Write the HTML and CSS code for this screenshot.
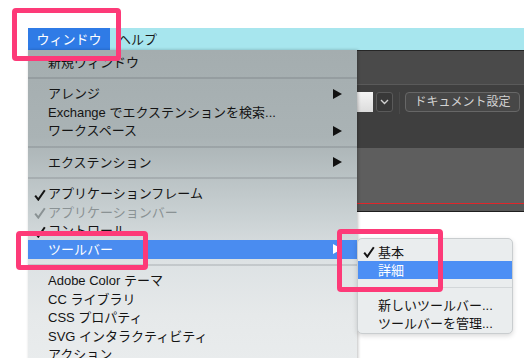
FILE: index.html
```html
<!DOCTYPE html>
<html lang="ja">
<head>
<meta charset="utf-8">
<title>ウィンドウ メニュー</title>
<link rel="stylesheet" href="styles.css">
</head>
<body>
<div class="screen">
	<div class="app">
		<div class="menubar">
			<span class="mb-item active">ウィンドウ</span>
			<span class="mb-item">ヘルプ</span>
		</div>
		<div class="app-head"></div>
		<div class="toolbar">
			<div class="field"></div>
			<div class="chev"><svg width="9" height="6" viewBox="0 0 9 6"><path d="M1 1 L4.5 4.5 L8 1" fill="none" stroke="#cfcfcf" stroke-width="1.4"/></svg></div>
			<div class="divider"></div>
			<div class="btn">ドキュメント設定</div>
		</div>
		<div class="panel"></div>
		<div class="panel-foot"></div>
	</div>

	<div class="menu">
		<div class="item">新規ウィンドウ</div>
		<div class="sep"></div>
		<div class="item">アレンジ<span class="arrow"></span></div>
		<div class="item">Exchange でエクステンションを検索...</div>
		<div class="item">ワークスペース<span class="arrow"></span></div>
		<div class="sep"></div>
		<div class="item">エクステンション<span class="arrow"></span></div>
		<div class="sep"></div>
		<div class="item"><svg class="check" width="12" height="12" viewBox="0 0 12 12"><path d="M1.2 6.6 L4.3 10.6 L10.8 1.2" fill="none" stroke="#141414" stroke-width="2"/></svg>アプリケーションフレーム</div>
		<div class="item disabled"><svg class="check" width="12" height="12" viewBox="0 0 12 12"><path d="M1.2 6.6 L4.3 10.6 L10.8 1.2" fill="none" stroke="#8a9294" stroke-width="2"/></svg>アプリケーションバー</div>
		<div class="item"><svg class="check" width="12" height="12" viewBox="0 0 12 12"><path d="M1.2 6.6 L4.3 10.6 L10.8 1.2" fill="none" stroke="#141414" stroke-width="2"/></svg>コントロール</div>
		<div class="item active">ツールバー<span class="arrow"></span></div>
		<div class="sep"></div>
		<div class="item">Adobe Color テーマ</div>
		<div class="item">CC ライブラリ</div>
		<div class="item">CSS プロパティ</div>
		<div class="item">SVG インタラクティビティ</div>
		<div class="item">アクション</div>
	</div>

	<div class="submenu">
		<div class="sub-item"><svg class="check" width="12" height="12" viewBox="0 0 12 12"><path d="M1.2 6.6 L4.3 10.6 L10.8 1.2" fill="none" stroke="#141414" stroke-width="2"/></svg>基本</div>
		<div class="sub-item active">詳細</div>
		<div class="sub-sep"></div>
		<div class="sub-item">新しいツールバー...</div>
		<div class="sub-item">ツールバーを管理...</div>
	</div>

	<div class="mark mark-window"></div>
	<div class="mark mark-toolbar"></div>
	<div class="mark mark-sub"></div>
</div>
</body>
</html>
```

FILE: styles.css
```css
html, body{
	margin:0;
	background:#fff;
}
body{
	font:13px/1 "Liberation Sans", "Noto Sans CJK JP", sans-serif;
	color:#141414;
}
.screen{
	position:relative;
	width:524px;
	height:358px;
	overflow:hidden;
	padding-top:28px;
	box-sizing:border-box;
}
.app{margin-left:28px;}

/* menu bar */
.menubar{
	height:22px;
	background:#a7e6ee;
	display:flex;
}
.mb-item{
	display:flex;
	align-items:center;
	padding:0 8px;
	color:#1a1a1a;
}
.mb-item.active{
	width:82px;
	padding:0;
	justify-content:center;
	background:#2f7be6;
	color:#fff;
}

/* app window behind */
.app-head{
	height:33px;
	background:#4a4a4a;
	border-top:1px solid #262626;
	border-bottom:1px solid #5a5a5a;
}
.toolbar{
	height:56px;
	padding:7px 4px 0 0;
	background:#3f3f3f;
	display:flex;
	justify-content:flex-end;
	align-items:flex-start;
}
.field{
	width:80px;
	height:20px;
	border-radius:3px 0 0 3px;
	background:linear-gradient(#f4f4f4, #dcdcdc);
}
.chev{
	width:15px;
	height:18px;
	margin-left:3px;
	border:1px solid #5a5a5a;
	border-radius:3px;
	background:#383838;
	display:flex;
	align-items:center;
	justify-content:center;
}
.divider{
	width:1px;
	height:22px;
	margin:0 5px 0 6px;
	background:#4a4a4a;
}
.btn{
	width:113px;
	height:18px;
	border:1px solid #676767;
	border-radius:4px;
	background:#474747;
	color:#d2d2d2;
	font-size:12px;
	display:flex;
	align-items:center;
	justify-content:center;
}
.panel{
	height:55px;
	background:#5e5e5e;
}
.panel-foot{
	height:7px;
	background:#585858;
	border-top:1px solid #e0262b;
	border-bottom:1px solid #1e1e1e;
}

/* window menu */
.menu{
	position:absolute;
	left:28px;
	top:50px;
	width:329px;
	height:312px;
	padding-top:3px;
	box-sizing:border-box;
	background:linear-gradient(#a4adaf 0%, #aab3b5 28%, #c3cbcd 48%, #dde2e4 68%, #e6e9ea 85%, #e9eced 100%);
	box-shadow:1px 0 3px rgba(0,0,0,.25);
}
.item{
	position:relative;
	height:18.5px;
	padding:0 15px 0 20px;
	display:flex;
	align-items:center;
	white-space:nowrap;
}
.item.disabled{color:#8a9294;}
.item.active{
	background:#4a8cf0;
	color:#fff;
}
.check{
	position:absolute;
	left:6px;
	top:4px;
}
.arrow{
	margin-left:auto;
	width:0;
	height:0;
	border-top:5.5px solid transparent;
	border-bottom:5.5px solid transparent;
	border-left:9px solid #111;
}
.item.active .arrow{border-left-color:#fff;}
.sep{
	height:13px;
	display:flex;
	align-items:center;
}
.sep::after{
	content:"";
	width:100%;
	height:2px;
	background:rgba(60,70,72,.16);
}

/* toolbar submenu */
.submenu{
	position:absolute;
	left:357px;
	top:238px;
	width:156px;
	height:96px;
	padding:4px 0;
	box-sizing:border-box;
	border:1px solid #c9cdcf;
	border-radius:5px;
	background:#eaedee;
	box-shadow:0 2px 5px rgba(0,0,0,.15);
	overflow:hidden;
}
.sub-item{
	position:relative;
	height:18px;
	padding-left:20px;
	display:flex;
	align-items:center;
	white-space:nowrap;
}
.sub-item .check{left:5px; top:3px;}
.sub-item.active{
	background:#4c8ff5;
	color:#fff;
}
.sub-sep{
	height:17px;
	display:flex;
	align-items:center;
}
.sub-sep::after{
	content:"";
	width:100%;
	height:1px;
	background:#d3d7d9;
}

/* pink annotation frames */
.mark{
	position:absolute;
	border:5px solid #fd3a78;
	border-radius:4px;
	box-sizing:border-box;
}
.mark-window{left:12px; top:8px; width:109px; height:53px;}
.mark-toolbar{left:16px; top:231px; width:132px; height:39px;}
.mark-sub{left:337px; top:229px; width:106px; height:63px;}
```
